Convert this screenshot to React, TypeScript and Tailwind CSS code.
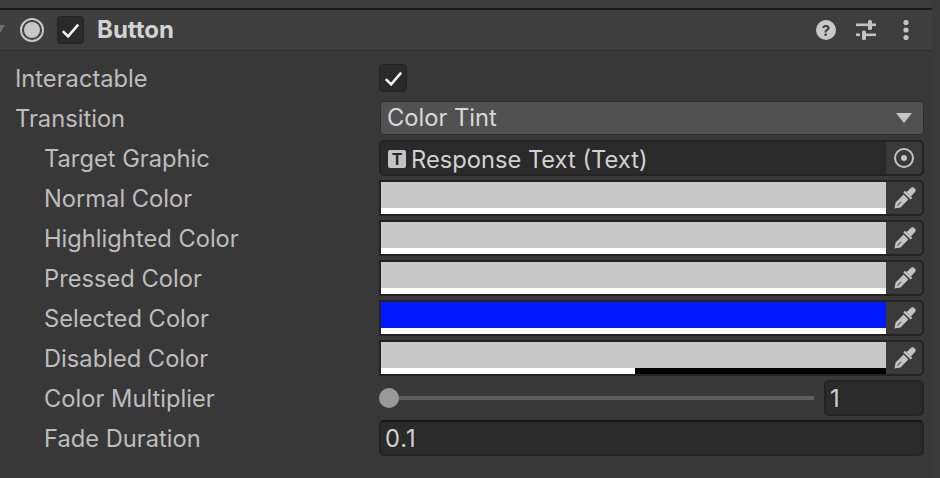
import type { ReactNode } from 'react'

// ── Icons ──────────────────────────────────────────────────────────────────

function Check() {
  return (
    <svg width="19" height="19" viewBox="0 0 16 16" fill="none" stroke="#f0f0f0" strokeWidth="2.2">
      <path d="M1.5 8.5 L6 13 L14.5 3" />
    </svg>
  )
}

function Eyedropper() {
  return (
    <svg className="ml-[2px]" width="24" height="24" viewBox="0 0 24 24" fill="#c4c4c4">
      <path d="M1.5 22.5 L2.6 16.6 L10.6 8.6 L15.4 13.4 L7.4 21.4 Z M4.4 18.9 L4.1 19.9 L5.1 19.6 L8.6 16.1 L7.9 15.4 Z" fillRule="evenodd" />
      <path d="M10.4 6.4 L12.1 4.7 L19.3 11.9 L17.6 13.6 Z" />
      <path d="M13.5 6 L18.5 1.6 C20.4 0.4 23.6 3.4 22.4 5.4 L18 10.5 Z" />
    </svg>
  )
}

function ColorField({ fill = 'bg-[#c8c8c8]', bottom }: { fill?: string; bottom?: ReactNode }) {
  return (
    <div className="flex h-[36px] w-full rounded-r-[5px] border-[2px] border-[#232323] bg-[#3a3a3a]">
      <div className="flex w-[505px] flex-col">
        <div className={`h-[26px] ${fill}`} />
        <div className="flex h-[6px]">{bottom ?? <div className="w-full bg-white" />}</div>
      </div>
      <div className="flex flex-1 items-center justify-center">
        <Eyedropper />
      </div>
    </div>
  )
}

function Row({ label, indent, children }: { label: string; indent?: boolean; children: ReactNode }) {
  return (
    <div className="flex h-[40px] items-center">
      <div className={`w-[379px] shrink-0 text-[#bdbdbd] ${indent ? 'pl-[44px]' : 'pl-[15px]'}`}>{label}</div>
      <div className="mb-[2px] w-[545px] shrink-0">{children}</div>
    </div>
  )
}

// ── Page ───────────────────────────────────────────────────────────────────

export default function App() {
  return (
    <div
      className="relative h-[478px] w-[940px] overflow-hidden bg-[#383838] text-[23.7px] leading-none"
      style={{ fontFamily: 'Inter, sans-serif' }}
    >
      <div className="h-[8px] bg-[#3c3c3c]" />
      <div className="h-[2px] bg-[#1a1a1a]" />

      {/* Header */}
      <div className="flex h-[41px] items-center border-b-[1px] border-[#2f2f2f] bg-[#3e3e3e]">
        <div className="ml-[-7px] h-0 w-0 border-x-[6px] border-t-[10px] border-x-transparent border-t-[#707070]" />
        <div className="ml-[15px] flex h-[24px] w-[24px] items-center justify-center rounded-full border-[2px] border-[#c8c8c8]">
          <div className="h-[16px] w-[16px] rounded-full bg-[#c8c8c8]" />
        </div>
        <div className="ml-[13px] flex h-[28px] w-[27px] items-center justify-center rounded-[4px] border border-[#232323] bg-[#2a2a2a]">
          <Check />
        </div>
        <div className="ml-[13px] text-[24px] font-bold text-[#d2d2d2]">Button</div>
        <div className="ml-auto mr-[31px] flex items-center">
          <div className="flex h-[20px] w-[20px] items-center justify-center rounded-full bg-[#c8c8c8] text-[15px] font-bold text-[#3e3e3e]">?</div>
          <svg className="ml-[20px]" width="20" height="20" viewBox="0 0 20 20" fill="#c4c4c4">
            <rect x="0" y="3.5" width="20" height="2.6" />
            <rect x="12" y="0" width="4" height="10" rx="1.5" />
            <rect x="0" y="13.5" width="4" height="2.6" />
            <rect x="7" y="13.5" width="13" height="2.6" />
            <rect x="6" y="10.5" width="4" height="9.5" rx="1.5" />
          </svg>
          <svg className="ml-[27px]" width="6" height="20" viewBox="0 0 6 20" fill="#c4c4c4">
            <circle cx="3" cy="2.5" r="2.6" />
            <circle cx="3" cy="10" r="2.6" />
            <circle cx="3" cy="17.5" r="2.6" />
          </svg>
        </div>
      </div>

      {/* Properties */}
      <div className="pt-[8px]">
        <Row label="Interactable">
          <div className="flex h-[28px] w-[28px] items-center justify-center rounded-[4px] border border-[#232323] bg-[#2a2a2a]">
            <Check />
          </div>
        </Row>
        <Row label="Transition">
          <div className="ml-[1px] flex h-[34px] items-center justify-between rounded-[4px] border-[1px] border-[#2e2e2e] bg-[#515151] pl-[6px] pr-[11px] text-[#d8d8d8]">
            <span>Color Tint</span>
            <div className="h-0 w-0 border-x-[8px] border-t-[10px] border-x-transparent border-t-[#c4c4c4]" />
          </div>
        </Row>
        <Row label="Target Graphic" indent>
          <div className="flex h-[36px] items-center rounded-[5px] border-[2px] border-[#232323] bg-[#2a2a2a] text-[#d2d2d2]">
            <div className="ml-[7px] mt-[2px] flex h-[18px] w-[18px] items-center justify-center rounded-[2px] bg-[#c4c4c4] text-[16px] font-bold text-[#2a2a2a]">T</div>
            <span className="ml-[5px] mt-[4px]">Response Text (Text)</span>
            <div className="ml-auto flex h-full w-[36px] items-center justify-center rounded-r-[4px] bg-[#3a3a3a]">
              <div className="flex h-[20px] w-[20px] items-center justify-center rounded-full border-[2px] border-[#c4c4c4]">
                <div className="h-[6px] w-[6px] rounded-full bg-[#c4c4c4]" />
              </div>
            </div>
          </div>
        </Row>
        <Row label="Normal Color" indent><ColorField /></Row>
        <Row label="Highlighted Color" indent><ColorField /></Row>
        <Row label="Pressed Color" indent><ColorField /></Row>
        <Row label="Selected Color" indent><ColorField fill="bg-[#0019ff]" /></Row>
        <Row label="Disabled Color" indent>
          <ColorField
            bottom={
              <>
                <div className="w-[254px] bg-white" />
                <div className="flex-1 bg-black" />
              </>
            }
          />
        </Row>
        <Row label="Color Multiplier" indent>
          <div className="flex items-center">
            <div className="flex w-[435px] items-center">
              <div className="h-[20px] w-[20px] shrink-0 rounded-full bg-[#999999]" />
              <div className="h-[4px] flex-1 bg-[#5e5e5e]" />
            </div>
            <div className="ml-[10px] flex h-[36px] flex-1 items-center rounded-[5px] border-[2px] border-[#232323] bg-[#2a2a2a] pl-[4px] pt-[2px] text-[#d2d2d2]">1</div>
          </div>
        </Row>
        <Row label="Fade Duration" indent>
          <div className="flex h-[36px] items-center rounded-[5px] border-[2px] border-[#232323] border-t-[#161616] bg-[#2a2a2a] pl-[4px] pt-[2px] tracking-[1px] text-[#d2d2d2]">0.1</div>
        </Row>
      </div>

      {/* Right edge of the panel */}
      <div className="absolute bottom-0 right-0 top-0 w-[8px] bg-[#3a3a3a]" />
    </div>
  )
}
